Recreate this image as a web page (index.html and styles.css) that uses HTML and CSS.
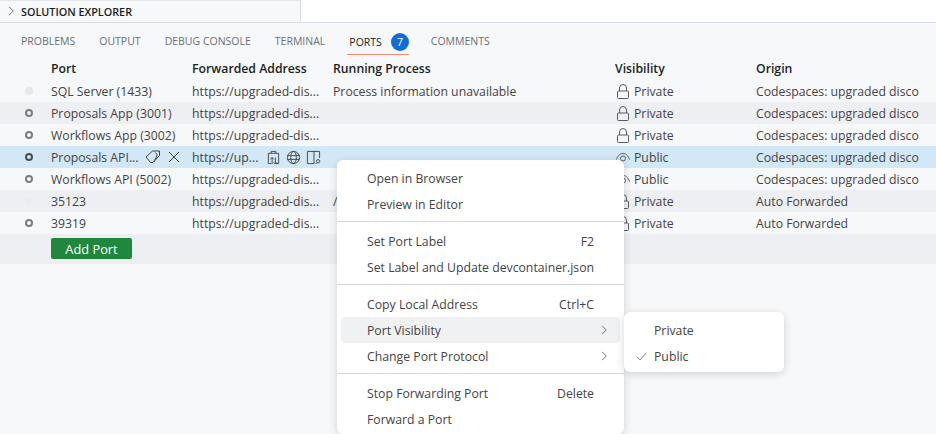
FILE: index.html
```html
<!DOCTYPE html>
<html lang="en">
<head>
    <meta charset="UTF-8">
    <title>Ports</title>
    <link rel="stylesheet" href="styles.css">
</head>
<body>
    <svg class="sprites" width="0" height="0">
        <symbol id="lock" viewBox="0 0 16 16"><path d="M3.500 8h9a1 1 0 0 1 1 1v5.500a1 1 0 0 1-1 1h-9a1 1 0 0 1-1-1V9a1 1 0 0 1 1-1zM4.500 8V5a3.500 3.500 0 0 1 7 0v3" fill="none" stroke="currentColor"/></symbol>
        <symbol id="eye" viewBox="0 0 16 16"><path d="M1.500 10.500C3 6 5.500 4.500 8 4.500s5 1.500 6.500 6" fill="none" stroke="currentColor"/><circle cx="8" cy="9.500" r="2.500" fill="none" stroke="currentColor"/></symbol>
        <symbol id="chev" viewBox="0 0 16 16"><path d="M5.500 2.500L11 8l-5.500 5.500" fill="none" stroke="currentColor"/></symbol>
    </svg>
    <div class="section-head">
        <svg class="head-chev"><use href="#chev"/></svg>
        <span>SOLUTION EXPLORER</span>
    </div>
    <div class="panel">
        <div class="tabs">
            <span class="tab">PROBLEMS</span>
            <span class="tab">OUTPUT</span>
            <span class="tab">DEBUG CONSOLE</span>
            <span class="tab">TERMINAL</span>
            <span class="tab active">PORTS <b class="badge">7</b></span>
            <span class="tab comments">COMMENTS</span>
        </div>
        <div class="row head">
            <div class="c-port">Port</div><div class="c-addr">Forwarded Address</div><div class="c-proc">Running Process</div><div class="c-vis">Visibility</div><div class="c-orig">Origin</div>
        </div>
        <div class="row">
            <i class="dot faded"></i><div class="c-port">SQL Server (1433)</div><div class="c-addr">https://upgraded-dis...</div><div class="c-proc">Process information unavailable</div>
            <div class="c-vis"><svg class="vis-icon"><use href="#lock"/></svg>Private</div><div class="c-orig">Codespaces: upgraded disco</div>
        </div>
        <div class="row alt">
            <i class="dot"></i><div class="c-port">Proposals App (3001)</div><div class="c-addr">https://upgraded-dis...</div><div class="c-proc"></div>
            <div class="c-vis"><svg class="vis-icon"><use href="#lock"/></svg>Private</div><div class="c-orig">Codespaces: upgraded disco</div>
        </div>
        <div class="row">
            <i class="dot"></i><div class="c-port">Workflows App (3002)</div><div class="c-addr">https://upgraded-dis...</div><div class="c-proc"></div>
            <div class="c-vis"><svg class="vis-icon"><use href="#lock"/></svg>Private</div><div class="c-orig">Codespaces: upgraded disco</div>
        </div>
        <div class="row selected">
            <i class="dot dark"></i>
            <div class="c-port with-actions">
                <span class="cut">Proposals API...</span>
                <svg class="act tag" viewBox="0 0 16 16"><path d="M1 8L7.500 2h7v4.500L8 13.500H5.500z" fill="none" stroke="currentColor"/><path d="M10.500 3.500a3.500 3.500 0 0 1 1 4.500l-3 5" fill="none" stroke="currentColor"/></svg>
                <svg class="act close" viewBox="0 0 16 16"><path d="M3 3l10 10M13 3L3 13" fill="none" stroke="currentColor"/></svg>
            </div>
            <div class="c-addr with-actions">
                <span class="cut">https://up...</span>
                <svg class="act clip" viewBox="0 0 16 16"><path d="M6 3.500H2.500v11h3M10 3.500h3.500v11h-3M5.500 3.500v-2h5v2z" fill="none" stroke="currentColor"/><path d="M6.500 15V8M4.500 10l2-2 2 2M10 8v7M8 13l2 2 2-2" fill="none" stroke="currentColor"/></svg>
                <svg class="act" viewBox="0 0 16 16"><circle cx="8" cy="8" r="6.500" fill="none" stroke="currentColor"/><ellipse cx="8" cy="8" rx="3" ry="6.500" fill="none" stroke="currentColor"/><path d="M1.500 6h13M1.500 10h13" fill="none" stroke="currentColor"/></svg>
                <svg class="act" viewBox="0 0 16 16"><path d="M8.500 14.500H1.500v-13h13v7M8.500 1.500v13" fill="none" stroke="currentColor"/><circle cx="13" cy="12" r="1.800" fill="none" stroke="currentColor"/><path d="M11.700 13.300l-1.700 1.700" fill="none" stroke="currentColor"/></svg>
            </div>
            <div class="c-proc"></div>
            <div class="c-vis"><svg class="vis-icon"><use href="#eye"/></svg>Public</div><div class="c-orig">Codespaces: upgraded disco</div>
        </div>
        <div class="row">
            <i class="dot"></i><div class="c-port">Workflows API (5002)</div><div class="c-addr">https://upgraded-dis...</div><div class="c-proc"></div>
            <div class="c-vis"><svg class="vis-icon"><use href="#eye"/></svg>Public</div><div class="c-orig">Codespaces: upgraded disco</div>
        </div>
        <div class="row alt">
            <i class="dot hidden"></i><div class="c-port">35123</div><div class="c-addr">https://upgraded-dis...</div><div class="c-proc">/</div>
            <div class="c-vis"><svg class="vis-icon"><use href="#lock"/></svg>Private</div><div class="c-orig">Auto Forwarded</div>
        </div>
        <div class="row">
            <i class="dot"></i><div class="c-port">39319</div><div class="c-addr">https://upgraded-dis...</div><div class="c-proc"></div>
            <div class="c-vis"><svg class="vis-icon"><use href="#lock"/></svg>Private</div><div class="c-orig">Auto Forwarded</div>
        </div>
        <div class="add-row"><button class="add-btn">Add Port</button></div>
    </div>

    <div class="menu main-menu">
        <div class="item">Open in Browser</div>
        <div class="item">Preview in Editor</div>
        <div class="sep"></div>
        <div class="item">Set Port Label<span>F2</span></div>
        <div class="item">Set Label and Update devcontainer.json</div>
        <div class="sep"></div>
        <div class="item">Copy Local Address<span>Ctrl+C</span></div>
        <div class="item hover">Port Visibility<svg class="sub-chev"><use href="#chev"/></svg></div>
        <div class="item">Change Port Protocol<svg class="sub-chev"><use href="#chev"/></svg></div>
        <div class="sep"></div>
        <div class="item">Stop Forwarding Port<span>Delete</span></div>
        <div class="item">Forward a Port</div>
    </div>
    <div class="menu sub-menu">
        <div class="item">Private</div>
        <div class="item"><svg class="check" viewBox="0 0 16 16"><path d="M1.500 8.500l4.500 4.500 8.500-10" fill="none" stroke="currentColor"/></svg>Public</div>
    </div>
</body>
</html>
```
FILE: styles.css
```css
* {
    box-sizing: border-box;
}
html, body {
    height: 100%;
}
body {
    margin: 0;
    overflow: hidden;
    background: #fff;
    color: #444;
    font-family: "Open Sans", "Noto Sans", sans-serif;
    font-size: 12.25px;
    position: relative;
    display: flex;
    flex-direction: column;
}
.sprites {
    position: absolute;
}
.section-head {
    flex: none;
    width: 301px;
    height: 22px;
    display: flex;
    align-items: center;
    padding-left: 5px;
    padding-bottom: 1px;
    background: #f7f8fa;
    border-top: 1px solid #e3e7ec;
    border-right: 1px solid #d5dce4;
    color: #1b1f24;
    font-size: 10.8px;
    font-weight: 600;
}
.head-chev {
    width: 12px;
    height: 12px;
    margin-right: 4px;
    color: #444;
}
.panel {
    flex: 1;
    background: #f7f8fa;
    border-top: 1px solid #d5dce4;
}
.tabs {
    display: flex;
    align-items: center;
    height: 35px;
    padding: 1px 0 0 21px;
    gap: 24px;
    font-size: 10.5px;
    color: #6a6f76;
}
.tab.active {
    display: flex;
    align-items: center;
    gap: 9px;
    color: #1b1f24;
    height: 28px;
    margin-left: -2px;
    padding: 2px 0 0 2px;
    border-bottom: 1px solid #f08a75;
}
.tab.comments {
    margin-left: -2px;
}
.badge {
    width: 18px;
    height: 18px;
    border-radius: 50%;
    background: #0f6cdb;
    color: #fff;
    font-weight: 400;
    text-align: center;
    line-height: 18px;
    font-size: 11px;
}
.row {
    display: flex;
    align-items: center;
    height: 22px;
    position: relative;
    white-space: nowrap;
}
.row > div {
    flex: none;
    overflow: hidden;
}
.row.alt {
    background: #eeeff2;
}
.row.selected {
    background: #d2e8f6;
}
.row.head {
    color: #1b1f24;
    font-weight: 600;
    padding-bottom: 2px;
}
.c-port {
    width: 141px;
    margin-left: 51px;
}
.c-addr {
    width: 141px;
}
.c-proc {
    width: 282px;
}
.c-vis {
    width: 141px;
    display: flex;
    align-items: center;
}
.dot {
    position: absolute;
    left: 25px;
    top: 7px;
    width: 8px;
    height: 8px;
    border-radius: 50%;
    border: 2px solid #7a7c81;
}
.dot.faded {
    background: #e6e8ec;
    border-color: #e6e8ec;
}
.dot.hidden {
    background: #ebecef;
    border-color: #ebecef;
}
.dot.dark {
    border-color: #4a4c50;
}
.vis-icon {
    width: 16px;
    height: 16px;
    margin-right: 3px;
    color: #5a5d62;
    flex: none;
}
.with-actions {
    display: flex;
    align-items: center;
}
.with-actions .cut {
    margin-right: 6px;
}
.act {
    width: 15px;
    height: 15px;
    margin-right: 5px;
    color: #444;
    flex: none;
}
.act.clip {
    margin-left: 2px;
}
.act.tag {
    width: 16px;
    height: 16px;
    margin-right: 5px;
}
.act.close {
    width: 16px;
    height: 16px;
    margin: 0;
}
.add-row {
    height: 30px;
    background: #eeeff2;
    padding: 4px 0 0 51px;
}
.add-btn {
    display: block;
    width: 81px;
    height: 21px;
    border: none;
    border-radius: 2px;
    background: #1f883d;
    color: #fff;
    padding: 0;
    font: 12.8px "Open Sans", sans-serif;
}
.menu {
    position: absolute;
    background: #fff;
    border-radius: 6px;
    box-shadow: 0 2px 8px rgba(0, 0, 0, 0.16);
}
.main-menu {
    left: 337px;
    top: 160px;
    width: 287px;
    height: 274px;
    padding-top: 5px;
}
.sub-menu {
    left: 624px;
    top: 312px;
    width: 160px;
    height: 60px;
    padding-top: 5px;
}
.item {
    height: 26px;
    display: flex;
    align-items: center;
    justify-content: space-between;
    padding: 0 26px;
    margin: 0 4px;
    border-radius: 4px;
    position: relative;
    white-space: nowrap;
}
.item.hover {
    background: #f0f1f3;
}
.sub-menu .item {
    justify-content: flex-start;
}
.sep {
    height: 1px;
    background: #d4d5d7;
    margin: 4px 0 6px;
}
.sub-chev {
    width: 12px;
    height: 12px;
    margin-right: -16px;
}
.check {
    position: absolute;
    left: 8px;
    top: 8px;
    width: 11px;
    height: 11px;
}
```
